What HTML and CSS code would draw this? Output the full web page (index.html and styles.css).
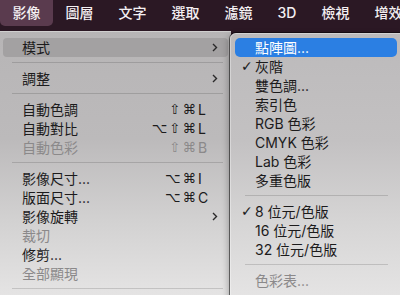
FILE: index.html
```html
<!DOCTYPE html>
<html lang="zh-Hant">
<head>
    <meta charset="UTF-8">
    <title>影像選單</title>
    <link rel="stylesheet" href="styles.css">
</head>
<body>

    <div class="menubar">
        <span class="top-item active">影像</span>
        <span class="top-item">圖層</span>
        <span class="top-item">文字</span>
        <span class="top-item">選取</span>
        <span class="top-item">濾鏡</span>
        <span class="top-item">3D</span>
        <span class="top-item">檢視</span>
        <span class="top-item">增效</span>
    </div>

    <div class="menus">
        <div class="menu main-menu">
            <div class="row selected"><span class="label">模式</span><svg class="arrow" width="6" height="9" viewBox="0 0 6 9"><path d="M1 1l3.5 3.5L1 8" /></svg></div>
            <div class="sep"></div>
            <div class="row"><span class="label">調整</span><svg class="arrow" width="6" height="9" viewBox="0 0 6 9"><path d="M1 1l3.5 3.5L1 8" /></svg></div>
            <div class="sep"></div>
            <div class="row"><span class="label">自動色調</span><span class="mods">⇧⌘</span><span class="key">L</span></div>
            <div class="row"><span class="label">自動對比</span><span class="mods">⌥⇧⌘</span><span class="key">L</span></div>
            <div class="row disabled"><span class="label">自動色彩</span><span class="mods">⇧⌘</span><span class="key">B</span></div>
            <div class="sep"></div>
            <div class="row"><span class="label">影像尺寸...</span><span class="mods">⌥⌘</span><span class="key">I</span></div>
            <div class="row"><span class="label">版面尺寸...</span><span class="mods">⌥⌘</span><span class="key">C</span></div>
            <div class="row"><span class="label">影像旋轉</span><svg class="arrow" width="6" height="9" viewBox="0 0 6 9"><path d="M1 1l3.5 3.5L1 8" /></svg></div>
            <div class="row disabled"><span class="label">裁切</span></div>
            <div class="row"><span class="label">修剪...</span></div>
            <div class="row disabled"><span class="label">全部顯現</span></div>
            <div class="sep"></div>
        </div>

        <div class="menu sub-menu">
            <div class="row highlight"><span class="check"></span><span class="label">點陣圖...</span></div>
            <div class="row"><span class="check">✓</span><span class="label">灰階</span></div>
            <div class="row"><span class="check"></span><span class="label">雙色調...</span></div>
            <div class="row"><span class="check"></span><span class="label">索引色</span></div>
            <div class="row"><span class="check"></span><span class="label">RGB 色彩</span></div>
            <div class="row"><span class="check"></span><span class="label">CMYK 色彩</span></div>
            <div class="row"><span class="check"></span><span class="label">Lab 色彩</span></div>
            <div class="row"><span class="check"></span><span class="label">多重色版</span></div>
            <div class="sep"></div>
            <div class="row"><span class="check">✓</span><span class="label">8 位元/色版</span></div>
            <div class="row"><span class="check"></span><span class="label">16 位元/色版</span></div>
            <div class="row"><span class="check"></span><span class="label">32 位元/色版</span></div>
            <div class="sep"></div>
            <div class="row disabled"><span class="check"></span><span class="label">色彩表...</span></div>
        </div>
    </div>

</body>
</html>
```

FILE: styles.css
```css
body {
    margin: 0;
    width: 400px;
    height: 295px;
    overflow: hidden;
    background-color: #2b1824;
    font-family: Inter, "Noto Sans CJK TC", sans-serif;
    font-size: 14px;
    color: #1c1b1c;
}

.menubar {
    display: flex;
    height: 31px;
    background-color: #2b1824;
}

.top-item {
    height: 26px;
    line-height: 26px;
    padding: 0 12.5px;
    color: #f4eff2;
    font-weight: 500;
    white-space: nowrap;
}

.top-item.active {
    background-color: #5a3b4e;
    border-radius: 0 0 5px 5px;
}

.menus {
    display: flex;
    align-items: flex-start;
}

.menu {
    box-sizing: border-box;
    height: 270px;
    flex-shrink: 0;
}

.main-menu {
    width: 231px;
    padding-top: 7px;
    background: linear-gradient(#b7b5b6 0%, #bcbabb 40%, #d2d1d1 70%, #e6e5e5 100%);
    box-shadow: inset 0 1px 0 rgba(255, 255, 255, 0.35);
    border-radius: 0 0 0 6px;
}

.sub-menu {
    position: relative;
    width: 172px;
    margin-top: 2px;
    margin-left: -1px;
    padding-top: 5px;
    background: linear-gradient(#bcbabb 0%, #c3c1c2 40%, #d6d5d5 70%, #e6e5e5 100%);
    border-radius: 6px 0 0 0;
    box-shadow: 0 0 0 1px rgba(0, 0, 0, 0.5), inset 0 0 0 1px rgba(255, 255, 255, 0.35), -2px 2px 6px rgba(0, 0, 0, 0.25);
}

.row {
    display: flex;
    align-items: center;
    height: 19px;
    line-height: 19px;
    white-space: nowrap;
}

.main-menu .row {
    margin: 0 3px;
    padding: 0 10px 0 19px;
}

.label {
    flex: 1;
}

.row.selected {
    background-color: #a3a1a2;
    border-radius: 4px;
}

.row.disabled {
    color: #8b898a;
}

.arrow {
    fill: none;
    stroke: #2a292a;
    stroke-width: 1.4;
}

.mods {
    font-family: "DejaVu Sans", sans-serif;
    font-size: 13.5px;
    letter-spacing: 2px;
}

.key {
    width: 10px;
    margin-right: 10px;
    font-size: 14px;
}

.sep {
    height: 1px;
    margin: 5px 8px 6px 12px;
    background-color: rgba(0, 0, 0, 0.14);
}

.sub-menu .row {
    margin: 0 5px;
    padding-left: 6px;
}

.sub-menu .sep {
    margin: 5px 14px 6px 15px;
}

.check {
    width: 14px;
    font-family: "DejaVu Sans", sans-serif;
    font-size: 14px;
}

.row.highlight {
    background-color: #2b7fe3;
    color: #ffffff;
    border-radius: 5px;
}
```
